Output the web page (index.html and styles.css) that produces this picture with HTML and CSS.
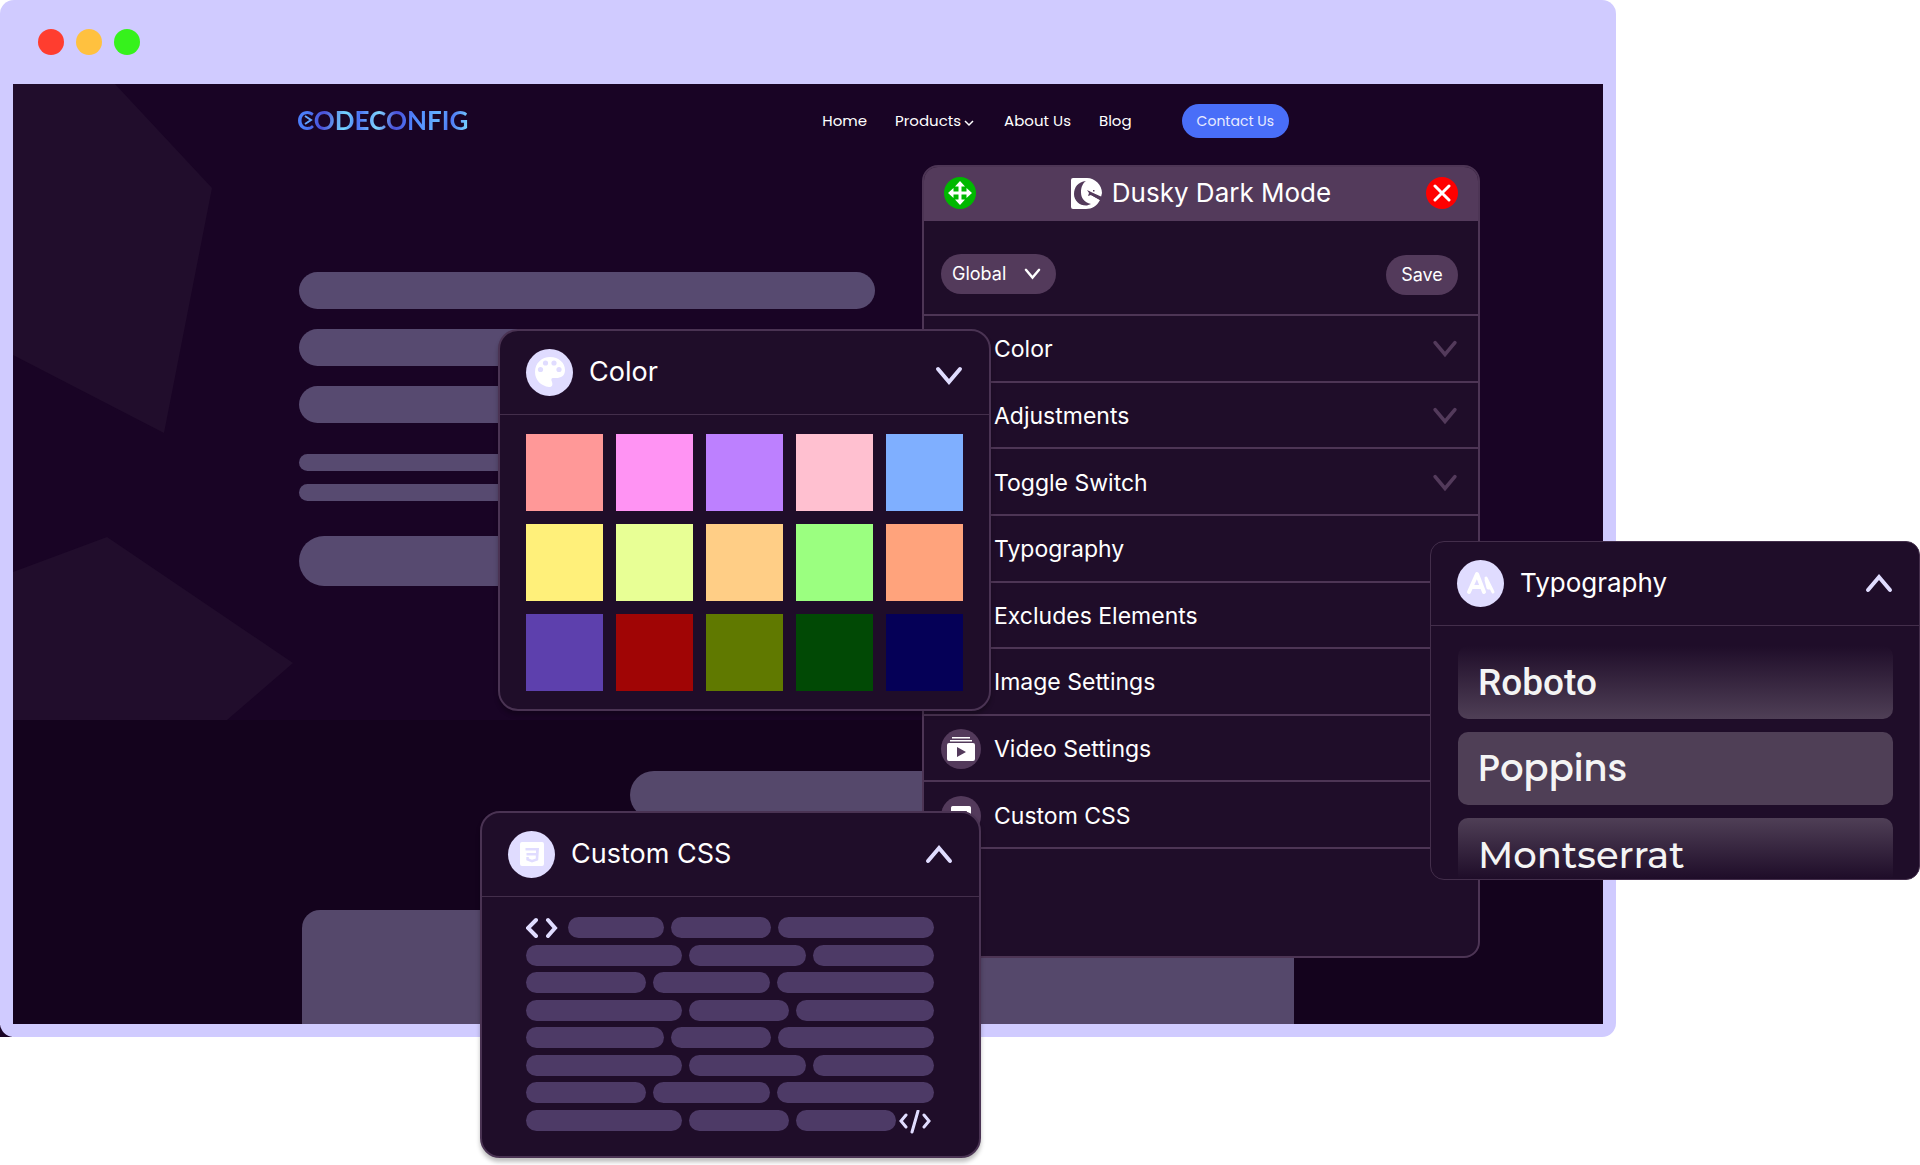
FILE: index.html
```html
<!DOCTYPE html>
<html lang="en">
<head>
<meta charset="utf-8">
<title>Dusky Dark Mode</title>
<link rel="stylesheet" href="styles.css">
</head>
<body>
<svg class="defs" aria-hidden="true">
  <defs>
    <symbol id="chevron" viewBox="0 0 28 20"><path d="M3 3 L14 16 L25 3" fill="none" stroke="currentColor" stroke-width="4" stroke-linecap="round" stroke-linejoin="miter"/></symbol>
    <symbol id="css" viewBox="0 0 24 24"><path fill-rule="evenodd" fill="#fff" d="M2 0H22Q24 0 24 2V22Q24 24 22 24H2Q0 24 0 22V2Q0 0 2 0Z M5.5 6V8.600H16V11H6.500V13.500H15.800V16.500L12 17.800L8.800 16.600V15H6.300V18.300L12 20.500L18.200 18.300L19 6Z"/></symbol>
  </defs>
</svg>
<main class="stage">
  <div class="frame-wrap">
    <div class="frame">
      <div class="lights"><span class="light red"></span><span class="light amber"></span><span class="light green"></span></div>
      <div class="site">
        <section class="hero">
          <svg class="shapes" width="300" height="636" aria-hidden="true"><path fill="#210d2c" d="M0 0H102L199 104L151 349L0 271Z M0 488L94 453L280 579L214 636H0Z"/></svg>
          <header class="site-head">
            <a class="logo" href="#">CODECONFIG<svg class="prompt" width="9" height="10" viewBox="0 0 9 10" aria-hidden="true"><path d="M1 1L7 5L1 9" fill="none" stroke="#63a4ff" stroke-width="2"/></svg></a>
            <nav class="nav">
              <a href="#">Home</a>
              <a href="#" class="has-menu">Products<svg width="10" height="7" aria-hidden="true"><path d="M1 1L5 5L9 1" fill="none" stroke="#fff" stroke-width="1.500"/></svg></a>
              <a href="#">About Us</a>
              <a href="#">Blog</a>
              <a href="#" class="contact">Contact Us</a>
            </nav>
          </header>
          <div class="lines">
            <span class="line wide"></span>
            <span class="line"></span>
            <span class="line"></span>
            <span class="line thin first"></span>
            <span class="line thin"></span>
            <span class="line cta"></span>
          </div>
        </section>
        <section class="lower">
          <span class="heading-bar"></span>
          <span class="block"></span>
        </section>
      </div>
    </div>
  </div>

  <section class="panel">
    <header class="panel-head">
      <button class="round move" aria-label="Move"><svg width="24" height="24" viewBox="0 0 24 24"><path d="M12 4V20M4 12H20" stroke="#fff" stroke-width="3"/><path fill="#fff" d="M12 0L17 5.500H7ZM12 24L17 18.500H7ZM0 12L5.500 7V17ZM24 12L18.500 7V17Z"/></svg></button>
      <h1><svg width="31" height="31" viewBox="0 0 31 31" aria-hidden="true"><path fill="#fff" d="M2 0H16C24 0 31 7 31 15L30 19L22 16L18 13L20 17L29 22C26 28 21 31 15 31H2Q0 31 0 29V2Q0 0 2 0Z"/><path fill="#533a5b" d="M15 3C7 4 3 9 3 16C3 23 9 28 16 27.500L20 26C13 24 10 20 10 14C10 9 12 5 15 3Z"/><path fill="#533a5b" d="M16 12L20 14L31 19V20L29 22L20 17L17 18L18 15ZM22 12h1.500v1.500H22Z"/></svg>Dusky Dark Mode</h1>
      <button class="round close" aria-label="Close"><svg width="18" height="18" viewBox="0 0 18 18"><path d="M2 2L16 16M16 2L2 16" stroke="#fff" stroke-width="3" stroke-linecap="round"/></svg></button>
    </header>
    <div class="tools">
      <label class="scope"><select aria-label="Scope"><option>Global</option></select><svg width="17" height="12"><use href="#chevron"/></svg></label>
      <button class="save">Save</button>
    </div>
    <ul class="rows">
      <li><button><span class="badge"></span>Color<svg class="chev"><use href="#chevron"/></svg></button></li>
      <li><button><span class="badge"></span>Adjustments<svg class="chev"><use href="#chevron"/></svg></button></li>
      <li><button><span class="badge"></span>Toggle Switch<svg class="chev"><use href="#chevron"/></svg></button></li>
      <li><button><span class="badge"></span>Typography</button></li>
      <li><button><span class="badge"></span>Excludes Elements</button></li>
      <li><button><span class="badge"></span>Image Settings</button></li>
      <li><button><span class="badge"><svg width="28" height="24" viewBox="0 0 28 24"><path fill="#fff" fill-rule="evenodd" d="M5 0H23V1.500H5ZM3 3H25V4.500H3ZM2 6H26Q28 6 28 8V22Q28 24 26 24H2Q0 24 0 22V8Q0 6 2 6ZM10 10V20L19 15Z"/></svg></span>Video Settings</button></li>
      <li><button><span class="badge"><svg width="20" height="20"><use href="#css"/></svg></span>Custom CSS</button></li>
    </ul>
  </section>

  <section class="card color-card">
    <header class="card-head">
      <span class="icon"><svg width="30" height="30" viewBox="0 0 30 30"><path fill="#fff" d="M15 0C24 0 30 6 30 13C30 19 26 21 21 21H18C16 21 16 23 17 25C18 28 17 30 14 30C6 29 0 23 0 15C0 6 7 0 15 0Z"/><g fill="#e0dcff"><circle cx="5.500" cy="12.500" r="2.600"/><circle cx="10.500" cy="6" r="2.600"/><circle cx="19" cy="6" r="2.600"/><circle cx="24" cy="12.500" r="2.600"/></g></svg></span>
      <h2>Color</h2>
      <button class="toggle down" aria-label="Toggle color"><svg width="28" height="20"><use href="#chevron"/></svg></button>
    </header>
    <div class="swatches">
      <button class="s1" aria-label="Coral"></button><button class="s2" aria-label="Pink"></button><button class="s3" aria-label="Violet"></button><button class="s4" aria-label="Rose"></button><button class="s5" aria-label="Sky"></button>
      <button class="s6" aria-label="Yellow"></button><button class="s7" aria-label="Lime"></button><button class="s8" aria-label="Apricot"></button><button class="s9" aria-label="Mint"></button><button class="s10" aria-label="Orange"></button>
      <button class="s11" aria-label="Indigo"></button><button class="s12" aria-label="Crimson"></button><button class="s13" aria-label="Olive"></button><button class="s14" aria-label="Forest"></button><button class="s15" aria-label="Navy"></button>
    </div>
  </section>

  <section class="card css-card">
    <header class="card-head">
      <span class="icon"><svg width="24" height="24"><use href="#css"/></svg></span>
      <h2>Custom CSS</h2>
      <button class="toggle up" aria-label="Toggle custom CSS"><svg width="28" height="20"><use href="#chevron"/></svg></button>
    </header>
    <div class="code">
      <div class="code-row"><svg class="tag-open" width="35" height="21"><path d="M10 3L2 11L10 19M22 3L29 11L22 19" fill="none" stroke="#e0dcff" stroke-width="4" stroke-linecap="round"/></svg><i class="w96"></i><i class="w100"></i><i class="fill"></i></div>
      <div class="code-row"><i class="w156"></i><i class="w117"></i><i class="fill"></i></div>
      <div class="code-row"><i class="w120"></i><i class="w117"></i><i class="fill"></i></div>
      <div class="code-row"><i class="w156"></i><i class="w100"></i><i class="fill"></i></div>
      <div class="code-row"><i class="w138"></i><i class="w100"></i><i class="fill"></i></div>
      <div class="code-row"><i class="w156"></i><i class="w117"></i><i class="fill"></i></div>
      <div class="code-row"><i class="w120"></i><i class="w117"></i><i class="fill"></i></div>
      <div class="code-row"><i class="w156"></i><i class="w100"></i><i class="w100"></i><svg class="tag-close" width="32" height="24"><path d="M7 5L2 11L7 17M25 5L30 11L25 17M19 1L13 22" fill="none" stroke="#e0dcff" stroke-width="3" stroke-linecap="round"/></svg></div>
    </div>
  </section>

  <section class="card type-card">
    <header class="card-head">
      <span class="icon"><svg width="30" height="24" viewBox="0 0 30 24"><g fill="none" stroke="#fff" stroke-linecap="round" stroke-linejoin="round"><path d="M3 21L11 3L18 21M6 16H16" stroke-width="4"/><path d="M20 7L27 21M20 9L22 17H24" stroke-width="3"/></g></svg></span>
      <h2>Typography</h2>
      <button class="toggle up" aria-label="Toggle typography"><svg width="28" height="20"><use href="#chevron"/></svg></button>
    </header>
    <ul class="fonts">
      <li class="roboto">Roboto</li>
      <li class="poppins">Poppins</li>
      <li class="montserrat">Montserrat</li>
    </ul>
  </section>
</main>
</body>
</html>
```
FILE: styles.css
```css
* { box-sizing: border-box; }
body { margin: 0; background: #fff; color: #fff; font-family: Inter, "Liberation Sans", sans-serif; }
button, select { font: inherit; color: inherit; border: 0; padding: 0; background: none; cursor: pointer; }
a { color: inherit; text-decoration: none; }
h1, h2, ul { margin: 0; padding: 0; font-weight: 400; list-style: none; }
svg { display: block; flex: none; }
.defs { position: absolute; width: 0; height: 0; }

.stage { position: relative; max-width: 1920px; min-height: 1165px; }

/* Browser window */
.frame-wrap { margin-right: 304px; background: linear-gradient(#190425, #190425) left bottom / 12px 12px no-repeat; }
.frame { padding: 0 13px 13px; border-radius: 14px; background: #d0cbff; }
.lights { display: flex; align-items: center; gap: 12px; height: 84px; padding-left: 25px; }
.light { width: 26px; height: 26px; border-radius: 50%; }
.red { background: #ff3d2f; }
.amber { background: #ffc13f; }
.green { background: #36f21c; }

.hero { position: relative; min-height: 636px; background: #190425; }
.shapes { position: absolute; left: 0; top: 0; }
.site-head { position: relative; display: flex; justify-content: space-between; align-items: center; height: 74px; padding: 0 314px 0 284px; }
.logo { position: relative; padding-bottom: 2px; font: 700 26px/30px Lato, sans-serif; color: transparent; background: linear-gradient(100deg, #4a7dfa 0 6%, #4b50d8 16%, #75d8ff 29%, #4a70f5 36%, #7fd6ff 47%, #4b50d8 57%, #4f86ff 68%, #66b4ff 82%, #4a70f5 88%, #7de0ff); background-clip: text; -webkit-background-clip: text; }
.prompt { position: absolute; left: 7px; top: 10px; }
.nav { display: flex; align-items: center; gap: 28px; font-family: Poppins, Inter, sans-serif; font-size: 15px; line-height: 20px; }
.has-menu { display: flex; align-items: center; gap: 3px; }
.has-menu svg { margin: 4px 2px 0 0; }
.contact { margin-left: 22px; padding: 7px 15px; border-radius: 17px; background: #496ef8; color: #e8ebff; font-size: 14px; }
.lines { display: flex; flex-direction: column; gap: 20px; padding: 114px 300px 0 286px; }
.line { width: 400px; height: 37px; border-radius: 19px; background: #574a70; }
.wide { width: 576px; }
.thin { height: 17px; margin-bottom: -7px; }
.first { margin-top: 11px; }
.cta { height: 50px; margin-top: 22px; border-radius: 25px; }
.lower { display: flex; flex-direction: column; min-height: 304px; padding: 51px 309px 0 289px; background: #14031d; }
.heading-bar { width: 400px; height: 48px; margin-left: 328px; border-radius: 24px; background: #55486b; }
.block { flex: 1; margin-top: 91px; border-radius: 18px 0 0 0; background: #55486b; }

/* Settings panel */
.panel { position: absolute; left: 922px; top: 165px; width: 558px; height: 793px; border: 2px solid #4d3555; border-radius: 16px; background: #1f0d29; overflow: hidden; }
.panel-head { display: flex; align-items: center; justify-content: space-between; height: 54px; padding: 0 20px 2px; background: #533a5b; }
.panel-head h1 { display: flex; align-items: center; gap: 10px; font-size: 26px; line-height: 32px; }
.round { display: grid; place-items: center; width: 32px; height: 32px; border-radius: 50%; }
.move { background: #00b800; }
.close { background: #f00; }
.tools { display: flex; align-items: center; justify-content: space-between; height: 95px; padding: 12px 20px 0 17px; border-bottom: 2px solid #4d3555; font-size: 18px; }
.scope { position: relative; }
.scope select { appearance: none; width: 115px; height: 40px; padding-left: 11px; border-radius: 20px; background: #533a5b; }
.scope svg { position: absolute; right: 15px; top: 14px; pointer-events: none; }
.save { width: 72px; height: 40px; margin-top: 2px; border-radius: 20px; background: #533a5b; }
.rows { display: grid; grid-auto-rows: 1fr; height: 533px; }
.rows li { border-bottom: 2px solid #4d3555; }
.rows button { display: flex; align-items: center; gap: 13px; width: 100%; height: 100%; padding: 2px 20px 0 17px; font-size: 23px; text-align: left; }
.badge { display: grid; place-items: center; width: 40px; height: 40px; border-radius: 50%; background: #533a5b; }
.chev { width: 26px; height: 18px; margin-left: auto; color: #533a5b; }

/* Floating cards */
.card { position: absolute; border: 2px solid #4a3353; border-radius: 20px; background: #1f0d29; overflow: hidden; }
.card-head { display: flex; align-items: center; gap: 16px; height: 84px; padding: 0 26px 1px; border-bottom: 1px solid #432e4b; }
.card-head h2 { font-size: 27px; line-height: 32px; }
.icon { display: grid; place-items: center; width: 47px; height: 47px; border-radius: 50%; background: #e0dcff; }
.toggle { margin-left: auto; color: #e0dcff; }
.down { padding-top: 8px; }
.up svg { transform: rotate(180deg); }
.color-card { left: 498px; top: 329px; width: 493px; box-shadow: 0 4px 4px rgba(0, 0, 0, .25); }
.swatches { display: grid; grid-template-columns: repeat(5, 1fr); gap: 13px; padding: 19px 26px 18px; }
.swatches button { height: 77px; }
.s1 { background: #ff9898; } .s2 { background: #ff93f3; } .s3 { background: #bd80ff; } .s4 { background: #ffc0d0; } .s5 { background: #7fafff; }
.s6 { background: #fff07a; } .s7 { background: #e8ff95; } .s8 { background: #ffce86; } .s9 { background: #9bff80; } .s10 { background: #ffa37c; }
.s11 { background: #5d40ad; } .s12 { background: #a00505; } .s13 { background: #607900; } .s14 { background: #014905; } .s15 { background: #050057; }
.css-card { left: 480px; top: 811px; width: 501px; box-shadow: 0 4px 4px rgba(0, 0, 0, .25); }
.code { display: flex; flex-direction: column; justify-content: space-between; height: 259px; padding: 20px 45px 25px 44px; }
.code-row { display: flex; gap: 7px; height: 21px; }
.code-row i { border-radius: 11px; background: #4d3a66; }
.fill { flex: 1; }
.w96 { width: 96px; } .w100 { width: 100px; } .w117 { width: 117px; } .w120 { width: 120px; } .w138 { width: 138px; } .w156 { width: 156px; }
.tag-close { margin-left: -4px; }
.type-card { right: 0; top: 541px; width: 490px; height: 339px; border-width: 1px; border-color: #432e4b; border-radius: 14px; }
.type-card h2 { font-size: 26px; }
.fonts { display: grid; gap: 13px; padding: 20px 26px 0 27px; }
.fonts li { height: 73px; padding: 0 20px; border-radius: 10px; background: #4f3f56; color: #f4f4f4; font-size: 37px; line-height: 73px; font-weight: 500; }
.fonts .roboto { font-family: Roboto, sans-serif; background: linear-gradient(#1f0d29, #4f3f56); }
.fonts .poppins { font-family: Poppins, Inter, sans-serif; }
.fonts .montserrat { font-family: Montserrat, Inter, sans-serif; background: linear-gradient(#4f3f56, #1f0d29 60px); }
```
